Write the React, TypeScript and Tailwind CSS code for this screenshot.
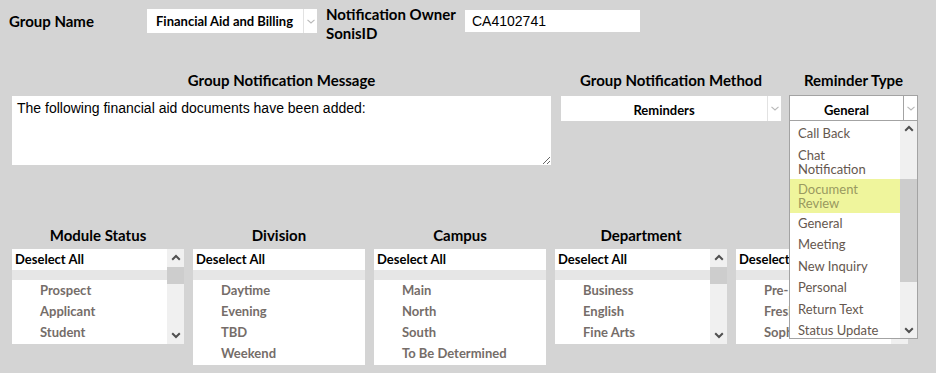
import React from "react";

const Chev = ({ color = "#b8b8b8" }: { color?: string }) => (
  <svg width="8" height="5" viewBox="0 0 8 5" fill="none">
    <path d="M0.5 0.8 L4 4 L7.5 0.8" stroke={color} strokeWidth="1.1" />
  </svg>
);

const ArrowUp = () => (
  <svg width="10" height="7" viewBox="0 0 10 7" fill="none">
    <path d="M1.2 5.8 L5 2 L8.8 5.8" stroke="#505050" strokeWidth="2" />
  </svg>
);
const ArrowDown = () => (
  <svg width="10" height="7" viewBox="0 0 10 7" fill="none">
    <path d="M1.2 1.2 L5 5 L8.8 1.2" stroke="#505050" strokeWidth="2" />
  </svg>
);

function Select({
  value,
  className,
  center,
  bordered,
  textClass = "pt-[2px]",
}: {
  value: string;
  className: string;
  center?: boolean;
  bordered?: boolean;
  textClass?: string;
}) {
  return (
    <div
      className={
        "flex bg-white " +
        (bordered ? "border border-[#a3a3a3] " : "") +
        className
      }
    >
      <div
        className={
          "flex-1 flex items-center text-[13px] font-bold text-black whitespace-nowrap " +
          textClass +
          " " +
          (center ? "justify-center" : "pl-[9px]")
        }
      >
        {value}
      </div>
      <div
        className={
          "w-[14px] flex items-center justify-center border-l " +
          (bordered ? "border-[#a3a3a3]" : "border-[#e2e2e2]")
        }
      >
        <Chev />
      </div>
    </div>
  );
}

function ListBox({
  items,
  scroll,
  tall,
}: {
  items: string[];
  scroll?: boolean;
  tall?: boolean;
}) {
  return (
    <div
      className={
        "w-[172px] bg-white flex overflow-hidden " +
        (tall ? "h-[116px]" : "h-[95px]")
      }
    >
      <div className="flex-1 flex flex-col min-w-0">
        <div className="h-[21px] shrink-0 flex items-center pl-[3px] text-[13px] font-bold text-black whitespace-nowrap">
          Deselect All
        </div>
        <div className="h-[10px] shrink-0 bg-[#e6e6e6]" />
        {items.map((it) => (
          <div
            key={it}
            className="h-[21px] shrink-0 flex items-center pl-[28px] text-[13px] font-bold text-[#756d69] whitespace-nowrap"
          >
            {it}
          </div>
        ))}
      </div>
      {scroll && (
        <div className="w-[17px] shrink-0 bg-[#f0f0f0] flex flex-col items-center">
          <div className="h-[17px] flex items-center justify-center">
            <ArrowUp />
          </div>
          <div className="w-full h-[17px] bg-[#cdcdcd] mt-[1px]" />
          <div className="flex-1" />
          <div className="h-[17px] flex items-center justify-center">
            <ArrowDown />
          </div>
        </div>
      )}
    </div>
  );
}

const reminderItems: { label: string; lines?: string[]; active?: boolean }[] = [
  { label: "Call Back" },
  { label: "Chat Notification", lines: ["Chat", "Notification"] },
  { label: "Document Review", lines: ["Document", "Review"], active: true },
  { label: "General" },
  { label: "Meeting" },
  { label: "New Inquiry" },
  { label: "Personal" },
  { label: "Return Text" },
  { label: "Status Update" },
];

export default function App() {
  return (
    <div className="relative w-[936px] h-[373px] overflow-hidden bg-[#d4d4d4] font-['Lato',sans-serif] text-black">
      {/* Row 1 */}
      <div className="h-[44px] flex items-start pt-[9px] pl-[9px]">
        <div className="w-[138px] h-[24px] flex items-center text-[15px] font-bold">
          Group Name
        </div>
        <Select
          value="Financial Aid and Billing"
          className="w-[170px] h-[24px] text-[13.5px]"
        />
        <div className="ml-[9px] mt-[-4px] w-[139px] text-[15px] leading-[19px] font-bold">
          Notification Owner
          <br />
          SonisID
        </div>
        <div className="mt-[1px] w-[175px] h-[22px] bg-white flex items-center pl-[7px] font-['Liberation_Sans',Arial,sans-serif] text-[14px]">
          CA4102741
        </div>
      </div>

      {/* Row 2 */}
      <div className="mt-[26px] flex pl-[12px]">
        <div className="w-[539px] flex flex-col">
          <div className="h-[20px] leading-[20px] text-center text-[15px] font-bold mb-[6px]">
            Group Notification Message
          </div>
          <textarea
            readOnly
            defaultValue="The following financial aid documents have been added:"
            className="h-[69px] w-full bg-white outline-none pl-[5px] pt-[4px] font-['Liberation_Sans',Arial,sans-serif] text-[14px] leading-[16px] text-black"
          />
        </div>
        <div className="ml-[10px] w-[220px] flex flex-col">
          <div className="h-[20px] leading-[20px] text-center text-[15px] font-bold mb-[6px]">
            Group Notification Method
          </div>
          <Select
            value="Reminders"
            center
            textClass="pt-[4px]"
            className="w-[220px] h-[25px]"
          />
        </div>
        <div className="ml-[8px] w-[129px] flex flex-col relative">
          <div className="h-[20px] leading-[20px] text-center text-[15px] font-bold mb-[5px]">
            Reminder Type
          </div>
          <Select
            value="General"
            center
            bordered
            textClass="pt-[5px]"
            className="w-[129px] h-[26px]"
          />
          {/* Dropdown menu */}
          <div className="absolute left-0 top-[51px] z-10 w-[129px] h-[218px] bg-white border border-t-0 border-[#a3a3a3] flex overflow-hidden">
            <div className="flex-1 flex flex-col min-w-0 pt-[2px]">
              {reminderItems.map((it) =>
                it.lines ? (
                  <div
                    key={it.label}
                    className={
                      "shrink-0 py-[3px] pl-[8px] text-[13px] leading-[14px] " +
                      (it.active ? "bg-[#eff59c] text-[#999960]" : "text-[#65574e]")
                    }
                  >
                    {it.lines[0]}
                    <br />
                    {it.lines[1]}
                  </div>
                ) : (
                  <div
                    key={it.label}
                    className="shrink-0 py-[3px] pl-[8px] text-[13px] leading-[15.5px] text-[#65574e] whitespace-nowrap"
                  >
                    {it.label}
                  </div>
                )
              )}
            </div>
            <div className="w-[17px] shrink-0 bg-[#f0f0f0] flex flex-col items-center">
              <div className="h-[14px] flex items-center justify-center">
                <ArrowUp />
              </div>
              <div className="w-full h-[103px] bg-[#cdcdcd] mt-[44px]" />
              <div className="flex-1" />
              <div className="h-[16px] flex items-center justify-center">
                <ArrowDown />
              </div>
            </div>
          </div>
        </div>
      </div>

      {/* Row 3 */}
      <div className="mt-[60px] flex pl-[12px] gap-[9px]">
        {[
          { h: "Module Status", items: ["Prospect", "Applicant", "Student"], scroll: true },
          { h: "Division", items: ["Daytime", "Evening", "TBD", "Weekend"], tall: true },
          { h: "Campus", items: ["Main", "North", "South", "To Be Determined"], tall: true },
          { h: "Department", items: ["Business", "English", "Fine Arts"], scroll: true },
          { h: "", items: ["Pre-Freshman", "Freshman", "Sophomore"], scroll: true },
        ].map((c, i) => (
          <div key={i} className="flex flex-col w-[172px]">
            <div className="h-[20px] leading-[20px] text-center text-[15px] font-bold mb-[4px]">
              {c.h}
            </div>
            <ListBox items={c.items} scroll={c.scroll} tall={c.tall} />
          </div>
        ))}
      </div>
    </div>
  );
}
